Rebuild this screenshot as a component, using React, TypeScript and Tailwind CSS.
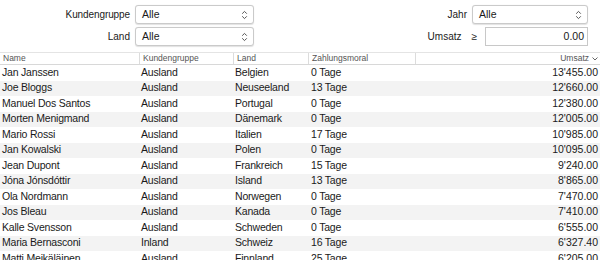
const rows = [
  ['Jan Janssen', 'Ausland', 'Belgien', '0 Tage', "13'455.00"],
  ['Joe Bloggs', 'Ausland', 'Neuseeland', '13 Tage', "12'660.00"],
  ['Manuel Dos Santos', 'Ausland', 'Portugal', '0 Tage', "12'380.00"],
  ['Morten Menigmand', 'Ausland', 'Dänemark', '0 Tage', "12'005.00"],
  ['Mario Rossi', 'Ausland', 'Italien', '17 Tage', "10'985.00"],
  ['Jan Kowalski', 'Ausland', 'Polen', '0 Tage', "10'095.00"],
  ['Jean Dupont', 'Ausland', 'Frankreich', '15 Tage', "9'240.00"],
  ['Jóna Jónsdóttir', 'Ausland', 'Island', '13 Tage', "8'865.00"],
  ['Ola Nordmann', 'Ausland', 'Norwegen', '0 Tage', "7'470.00"],
  ['Jos Bleau', 'Ausland', 'Kanada', '0 Tage', "7'410.00"],
  ['Kalle Svensson', 'Ausland', 'Schweden', '0 Tage', "6'555.00"],
  ['Maria Bernasconi', 'Inland', 'Schweiz', '16 Tage', "6'327.40"],
  ['Matti Meikäläinen', 'Ausland', 'Finnland', '25 Tage', "6'205.00"],
]

function UpDown() {
  return (
    <svg width="7" height="10" viewBox="0 0 7 10" className="shrink-0">
      <path d="M1.2 3.7 L3.5 1.4 L5.8 3.7 M1.2 6.3 L3.5 8.6 L5.8 6.3" fill="none" stroke="#555" strokeWidth="1" />
    </svg>
  )
}

function Select({ width }: { width: string }) {
  return (
    <div
      className={`${width} h-[19px] flex items-center justify-between pl-[6px] pr-[5px] bg-white border border-[#cacaca] rounded-[3px] shadow-[0_0.5px_1px_rgba(0,0,0,0.12)] text-[10.5px] text-[#1a1a1a]`}
    >
      <span>Alle</span>
      <UpDown />
    </div>
  )
}

export default function App() {
  return (
    <div className="w-[600px] h-[260px] overflow-hidden bg-white font-['Liberation_Sans',Arial,sans-serif] text-[#1a1a1a]">
      <div className="h-[52px] flex flex-col gap-[3px] pt-[5px]">
        <div className="flex items-center h-[19px]">
          <div className="w-[130px] text-right text-[10px] tracking-[-0.1px]">Kundengruppe</div>
          <div className="ml-[5px]">
            <Select width="w-[119px]" />
          </div>
          <div className="flex-1" />
          <div className="text-[10px] mr-[5px]">Jahr</div>
          <Select width="w-[116px]" />
          <div className="w-[12px]" />
        </div>
        <div className="flex items-center h-[19px]">
          <div className="w-[130px] text-right text-[10px]">Land</div>
          <div className="ml-[5px]">
            <Select width="w-[119px]" />
          </div>
          <div className="flex-1" />
          <div className="text-[10px]">Umsatz</div>
          <div className="text-[10px] ml-[10px] mr-[8px]">≥</div>
          <div className="w-[103px] h-[19px] border border-[#c8c8c8] bg-white flex items-center justify-end pr-[3px] text-[10.5px]">
            0.00
          </div>
          <div className="w-[12px]" />
        </div>
      </div>
      <div className="border-t border-[#e4e4e4] border-b border-b-[#d8d8d8] h-[13px] flex text-[8.5px] text-[#555] leading-[11px]">
        <div className="w-[139px] pl-[3px]">Name</div>
        <div className="w-[94px] pl-[3px] border-l border-[#dcdcdc]">Kundengruppe</div>
        <div className="w-[75px] pl-[3px] border-l border-[#dcdcdc]">Land</div>
        <div className="w-[107px] pl-[3px] border-l border-[#dcdcdc]">Zahlungsmoral</div>
        <div className="flex-1 flex justify-end items-center gap-[3px] pr-[2px] border-l border-[#dcdcdc]">
          <span>Umsatz</span>
          <svg width="6" height="4" viewBox="0 0 6 4">
            <path d="M0.5 0.5 L3 3 L5.5 0.5" fill="none" stroke="#666" strokeWidth="1" />
          </svg>
        </div>
      </div>
      <div className="text-[10.5px] tracking-[-0.2px]">
        {rows.map((r, i) => (
          <div key={i} className={`flex items-center h-[15.5px] ${i % 2 === 1 ? 'bg-[#f3f3f3]' : 'bg-white'}`}>
            <div className="w-[139px] pl-[2px] whitespace-nowrap">{r[0]}</div>
            <div className="w-[94px] pl-[2px]">{r[1]}</div>
            <div className="w-[75px] pl-[2px]">{r[2]}</div>
            <div className="w-[107px] pl-[3px]">{r[3]}</div>
            <div className="flex-1 text-right pr-[2px] tracking-normal">{r[4]}</div>
          </div>
        ))}
      </div>
    </div>
  )
}
